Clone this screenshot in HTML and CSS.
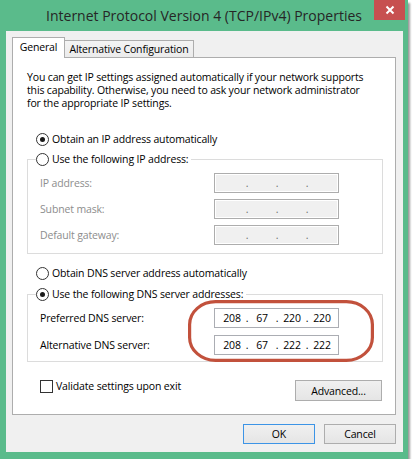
FILE: index.html
```html
<!DOCTYPE html>
<html lang="en">
<head>
    <meta charset="UTF-8">
    <title>Internet Protocol Version 4 (TCP/IPv4) Properties</title>
    <link rel="stylesheet" href="styles.css">
</head>
<body>
    <div class="window">
        <div class="titlebar">
            <span class="title">Internet Protocol Version 4 (TCP/IPv4) Properties</span>
            <div class="close">
                <svg viewBox="0 0 10 10" width="10" height="10">
                    <path d="M1.5 1.5L8.5 8.5M8.5 1.5L1.5 8.5" stroke="#fff" stroke-width="2" fill="none"/>
                </svg>
            </div>
        </div>

        <div class="client">
            <div class="tabs">
                <div class="tab active">General</div>
                <div class="tab">Alternative Configuration</div>
            </div>

            <div class="panel">
                <p class="intro">
                    You can get IP settings assigned automatically if your network supports<br>
                    this capability. Otherwise, you need to ask your network administrator<br>
                    for the appropriate IP settings.
                </p>

                <div class="option"><span class="radio checked"></span>Obtain an IP address automatically</div>

                <fieldset class="group">
                    <legend><div class="option"><span class="radio"></span>Use the following IP address:</div></legend>
                    <div class="fields disabled">
                        <span class="label">IP address:</span>
                        <div class="ipbox"><span class="seg"></span><span class="dot">.</span><span class="seg"></span><span class="dot">.</span><span class="seg"></span><span class="dot">.</span><span class="seg"></span></div>
                        <span class="label">Subnet mask:</span>
                        <div class="ipbox"><span class="seg"></span><span class="dot">.</span><span class="seg"></span><span class="dot">.</span><span class="seg"></span><span class="dot">.</span><span class="seg"></span></div>
                        <span class="label">Default gateway:</span>
                        <div class="ipbox"><span class="seg"></span><span class="dot">.</span><span class="seg"></span><span class="dot">.</span><span class="seg"></span><span class="dot">.</span><span class="seg"></span></div>
                    </div>
                </fieldset>

                <div class="option option-dns"><span class="radio"></span>Obtain DNS server address automatically</div>

                <fieldset class="group group-dns">
                    <legend><div class="option"><span class="radio checked"></span>Use the following DNS server addresses:</div></legend>
                    <div class="fields fields-dns">
                        <span class="label">Preferred DNS server:</span>
                        <div class="ipbox"><span class="seg">208</span><span class="dot">.</span><span class="seg">67</span><span class="dot">.</span><span class="seg">220</span><span class="dot">.</span><span class="seg">220</span></div>
                        <span class="label">Alternative DNS server:</span>
                        <div class="ipbox"><span class="seg">208</span><span class="dot">.</span><span class="seg">67</span><span class="dot">.</span><span class="seg">222</span><span class="dot">.</span><span class="seg">222</span></div>
                    </div>
                </fieldset>

                <div class="panel-foot">
                    <div class="check-row"><span class="checkbox"></span>Validate settings upon exit</div>
                    <button class="btn btn-advanced">Advanced...</button>
                </div>

                <!-- hand-drawn highlight around the DNS fields -->
                <svg class="highlight" width="186" height="62" viewBox="0 0 186 62">
                    <rect x="1.6" y="1.6" width="182.8" height="58.8" rx="26" ry="23" fill="none" stroke="#c2513c" stroke-width="3.2"/>
                </svg>
            </div>

            <div class="actions">
                <button class="btn btn-default">OK</button>
                <button class="btn">Cancel</button>
            </div>
        </div>
    </div>
</body>
</html>
```

FILE: styles.css
```css
* {
    margin: 0;
    padding: 0;
    box-sizing: border-box;
}

body {
    background: #fff;
    font-family: "Segoe UI", "Open Sans", sans-serif;
    font-size: 10.5px;
    letter-spacing: -0.15px;
    color: #000;
    white-space: nowrap;
}

.window {
    width: 408px;
    height: 459px;
    background: #5abb8b;
    display: flex;
    flex-direction: column;
    box-shadow: 2px 3px 2px rgba(0, 0, 0, 0.4);
}

.titlebar {
    height: 31px;
    position: relative;
    display: flex;
    align-items: center;
    justify-content: center;
}

.title {
    font-size: 14px;
    letter-spacing: 0;
    color: #262626;
}

.close {
    position: absolute;
    top: 0;
    right: 3px;
    width: 31px;
    height: 20px;
    background: #c75050;
    display: flex;
    align-items: center;
    justify-content: center;
}

.client {
    flex: 1;
    margin: 0 5px 7px 6px;
    background: #f0f0f0;
    padding: 6px 7px 0 6px;
    display: flex;
    flex-direction: column;
}

/* tabs */
.tabs {
    display: flex;
    align-items: flex-end;
    height: 21px;
    margin-bottom: -1px;
    position: relative;
    z-index: 1;
}

.tab {
    height: 18px;
    width: 130px;
    margin-left: -1px;
    border: 1px solid #adadad;
    background: linear-gradient(#f3f3f3, #ebebeb);
    display: flex;
    align-items: center;
    justify-content: center;
    padding-bottom: 1px;
}

.tab.active {
    width: 53px;
    height: 21px;
    margin-left: 0;
    background: #fff;
    border-bottom: none;
    padding-bottom: 3px;
}

.panel {
    height: 358px;
    background: #fff;
    border: 1px solid #adadad;
    padding: 13px 12px 0 14px;
    position: relative;
}

.intro {
    line-height: 13px;
}

/* radio / checkbox rows */
.option {
    display: flex;
    align-items: center;
    gap: 3px;
    height: 16px;
    padding-left: 9px;
    margin-top: 21px;
}

.option-dns {
    margin-top: 11px;
}

legend .option {
    margin-top: 0;
    padding-left: 0;
}

.radio {
    width: 13px;
    height: 13px;
    border: 1px solid #333;
    border-radius: 50%;
    background: #fff;
    display: flex;
    align-items: center;
    justify-content: center;
}

.radio.checked::after {
    content: "";
    width: 5px;
    height: 5px;
    border-radius: 50%;
    background: #1a1a1a;
}

.group {
    margin-top: 4px;
    border: 1px solid #dcdcdc;
    padding: 6px 0 8px 0;
}

.group-dns {
    margin-top: 5px;
    padding-bottom: 6px;
}

.group legend {
    margin-left: 8px;
    padding-right: 3px;
}

.fields {
    display: grid;
    grid-template-columns: 174px 125px;
    grid-auto-rows: 20px;
    row-gap: 6px;
    align-items: center;
    padding-left: 12px;
}

.fields-dns {
    row-gap: 7px;
}

.fields.disabled .label {
    color: #8d8d8d;
}

.ipbox {
    height: 20px;
    border: 1px solid #abadb3;
    background: #fff;
    display: flex;
    align-items: center;
    padding-left: 5px;
}

.fields.disabled .ipbox {
    background: #f0f0f0;
    border-color: #adadad;
    box-shadow: inset 0 0 0 1px #fff;
    color: #6d6d6d;
}

.seg {
    width: 24px;
    text-align: center;
}

.dot {
    width: 6px;
    text-align: center;
}

/* footer inside panel */
.panel-foot {
    margin-top: 16px;
    display: flex;
    justify-content: space-between;
    align-items: flex-start;
    padding-left: 13px;
    padding-right: 1px;
}

.check-row {
    display: flex;
    align-items: center;
    gap: 3px;
    height: 16px;
}

.checkbox {
    width: 13px;
    height: 13px;
    border: 1px solid #333;
    background: #fff;
}

.btn {
    font-family: inherit;
    font-size: 10.5px;
    letter-spacing: -0.15px;
    color: #000;
    height: 20px;
    width: 72px;
    border: 1px solid #adadad;
    background: linear-gradient(#f0f0f0, #e5e5e5);
}

.btn-advanced {
    width: 87px;
    height: 21px;
    margin-top: 2px;
}

.btn-default {
    border-color: #3c94e6;
}

.actions {
    margin-top: 9px;
    display: flex;
    justify-content: flex-end;
    gap: 9px;
}

.highlight {
    position: absolute;
    left: 175px;
    top: 242px;
}
```
